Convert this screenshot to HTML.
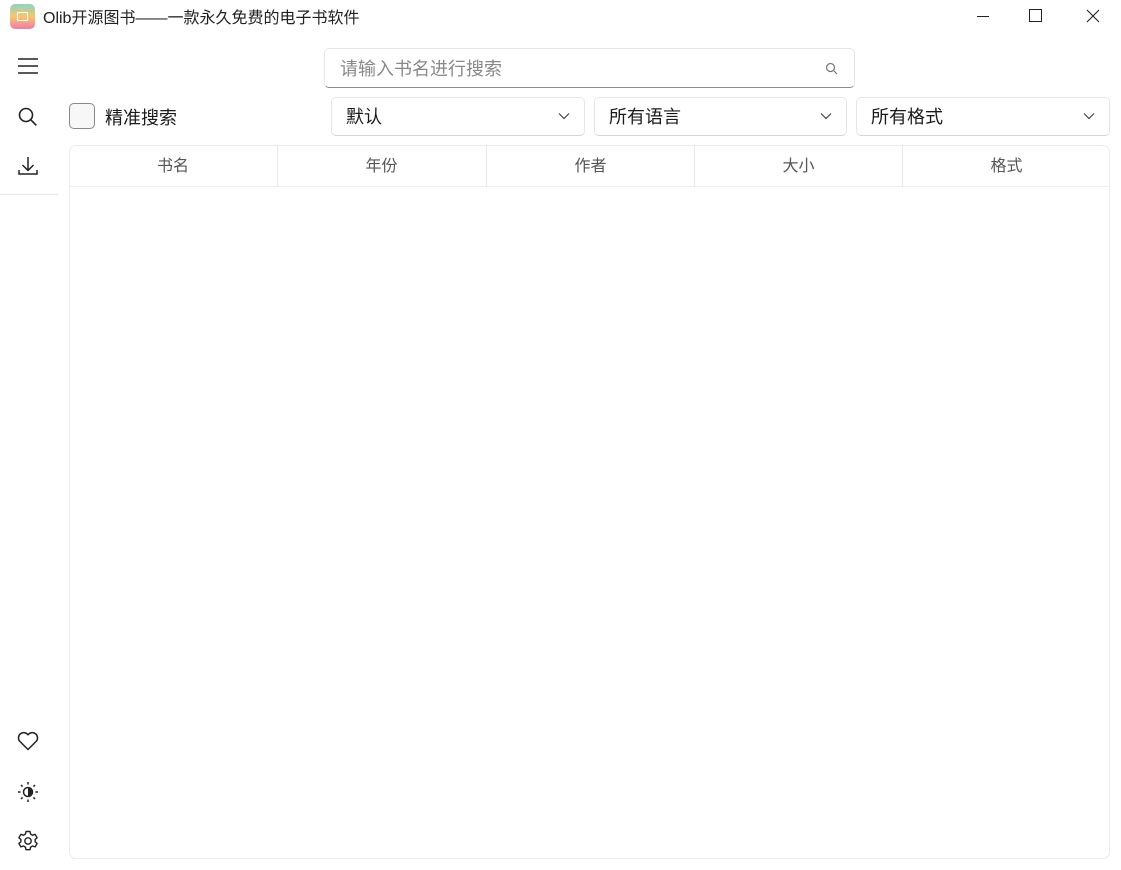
<!DOCTYPE html>
<html><head><meta charset="utf-8"><style>
*{margin:0;padding:0;box-sizing:border-box}
body{width:1121px;height:870px;background:#fff;position:relative;overflow:hidden;font-family:"Liberation Sans","Noto Sans CJK SC",sans-serif;color:#1a1a1a}
.a{position:absolute}
.title{left:43px;top:4px;font-size:16px;color:#222}
.logo{left:10px;top:4px;width:25px;height:25px;border-radius:5px;background:linear-gradient(180deg,#8fd3c8,#f5c86a 50%,#f07aa8)}
.logo i{position:absolute;left:7px;top:8px;width:11px;height:9px;border:1.5px solid #fff;border-radius:1px}
.box{border:1px solid #e6e6e6;border-radius:5px;background:#fff}
.dd{top:97px;height:39px;font-size:18px;padding:5px 14px;border-bottom-color:#d6d6d6}
.dd svg{position:absolute;right:14px;top:14px}
.th{top:145px;height:42px;width:208px;text-align:center;line-height:44px;font-size:16px;color:#555;border-left:1px solid #e8e8e8}
</style></head><body>
<div class="a logo"><i></i></div>
<div class="a title">Olib开源图书——一款永久免费的电子书软件</div>
<svg class="a" style="left:975px;top:8px" width="16" height="16"><path d="M2 8.5h12" stroke="#222" stroke-width="1"/></svg>
<svg class="a" style="left:1028px;top:8px" width="16" height="16"><rect x="1.5" y="1.5" width="12" height="12" fill="none" stroke="#222"/></svg>
<svg class="a" style="left:1085px;top:8px" width="16" height="16"><path d="M2 2l12 12M14 2L2 14" stroke="#222" stroke-width="1.1"/></svg>
<svg class="a" style="left:17px;top:57px" width="22" height="18"><path d="M1 2h20M1 9h20M1 16h20" stroke="#222" stroke-width="1.5"/></svg>
<svg class="a" style="left:17px;top:106px" width="22" height="22"><circle cx="9" cy="9" r="6.5" fill="none" stroke="#222" stroke-width="1.6"/><path d="M13.8 13.8l5.5 5.5" stroke="#222" stroke-width="1.6"/></svg>
<svg class="a" style="left:17px;top:155px" width="22" height="22"><path d="M11 2v13M5.5 10l5.5 5.5 5.5-5.5M2 15v4h18v-4" fill="none" stroke="#222" stroke-width="1.5"/></svg>
<div class="a" style="left:0;top:194px;width:58px;height:1px;background:#e5e5e5"></div>
<svg class="a" style="left:16px;top:730px" width="24" height="22"><path d="M12 19.5L3.5 11A4.8 4.8 0 0 1 12 4.8 4.8 4.8 0 0 1 20.5 11z" fill="none" stroke="#222" stroke-width="1.5" stroke-linejoin="round"/></svg>
<svg class="a" style="left:16px;top:780px" width="24" height="24"><circle cx="12" cy="12" r="4.5" fill="none" stroke="#222" stroke-width="1.5"/><path d="M12 7.5a4.5 4.5 0 0 1 0 9z" fill="#222"/><path d="M12 2v2.5M12 19.5V22M2 12h2.5M19.5 12H22M5 5l1.6 1.6M17.4 17.4L19 19M5 19l1.6-1.6M17.4 6.6L19 5" stroke="#222" stroke-width="1.5"/></svg>
<svg class="a" style="left:16px;top:829px" width="24" height="24"><path d="M10 2.5h4l.6 2.6 2 1.1 2.5-.9 2 3.4-2 1.8v2.2l2 1.8-2 3.4-2.5-.9-2 1.1-.6 2.6h-4l-.6-2.6-2-1.1-2.5.9-2-3.4 2-1.8v-2.2l-2-1.8 2-3.4 2.5.9 2-1.1z" fill="none" stroke="#222" stroke-width="1.4" stroke-linejoin="round"/><circle cx="12" cy="12" r="3.2" fill="none" stroke="#222" stroke-width="1.4"/></svg>
<div class="a box" style="left:324px;top:48px;width:531px;height:40px;border-bottom:1.5px solid #8a8a8a;font-size:18px;color:#888;padding:6px 15px">请输入书名进行搜索
<svg class="a" style="left:500px;top:13px" width="14" height="14"><circle cx="5.5" cy="5.5" r="4" fill="none" stroke="#777" stroke-width="1.2"/><path d="M8.5 8.5l3.5 3.5" stroke="#777" stroke-width="1.2"/></svg></div>
<div class="a" style="left:69px;top:103px;width:26px;height:26px;border:1px solid #888;border-radius:5px;background:#f7f7f7"></div>
<div class="a" style="left:105px;top:104px;font-size:18px">精准搜索</div>
<div class="a box dd" style="left:331px;width:254px">默认<svg width="12" height="8"><path d="M1 1.5l5 5 5-5" fill="none" stroke="#444" stroke-width="1.2"/></svg></div>
<div class="a box dd" style="left:594px;width:253px">所有语言<svg width="12" height="8"><path d="M1 1.5l5 5 5-5" fill="none" stroke="#444" stroke-width="1.2"/></svg></div>
<div class="a box dd" style="left:856px;width:254px">所有格式<svg width="12" height="8"><path d="M1 1.5l5 5 5-5" fill="none" stroke="#444" stroke-width="1.2"/></svg></div>
<div class="a box" style="left:69px;top:145px;width:1041px;height:714px;border-color:#ececec;border-radius:7px"></div>
<div class="a" style="left:70px;top:186px;width:1039px;height:1px;background:#eeeeee"></div>
<div class="a th" style="left:69px;border-left:none">书名</div>
<div class="a th" style="left:277px">年份</div>
<div class="a th" style="left:486px">作者</div>
<div class="a th" style="left:694px">大小</div>
<div class="a th" style="left:902px">格式</div>
</body></html>
